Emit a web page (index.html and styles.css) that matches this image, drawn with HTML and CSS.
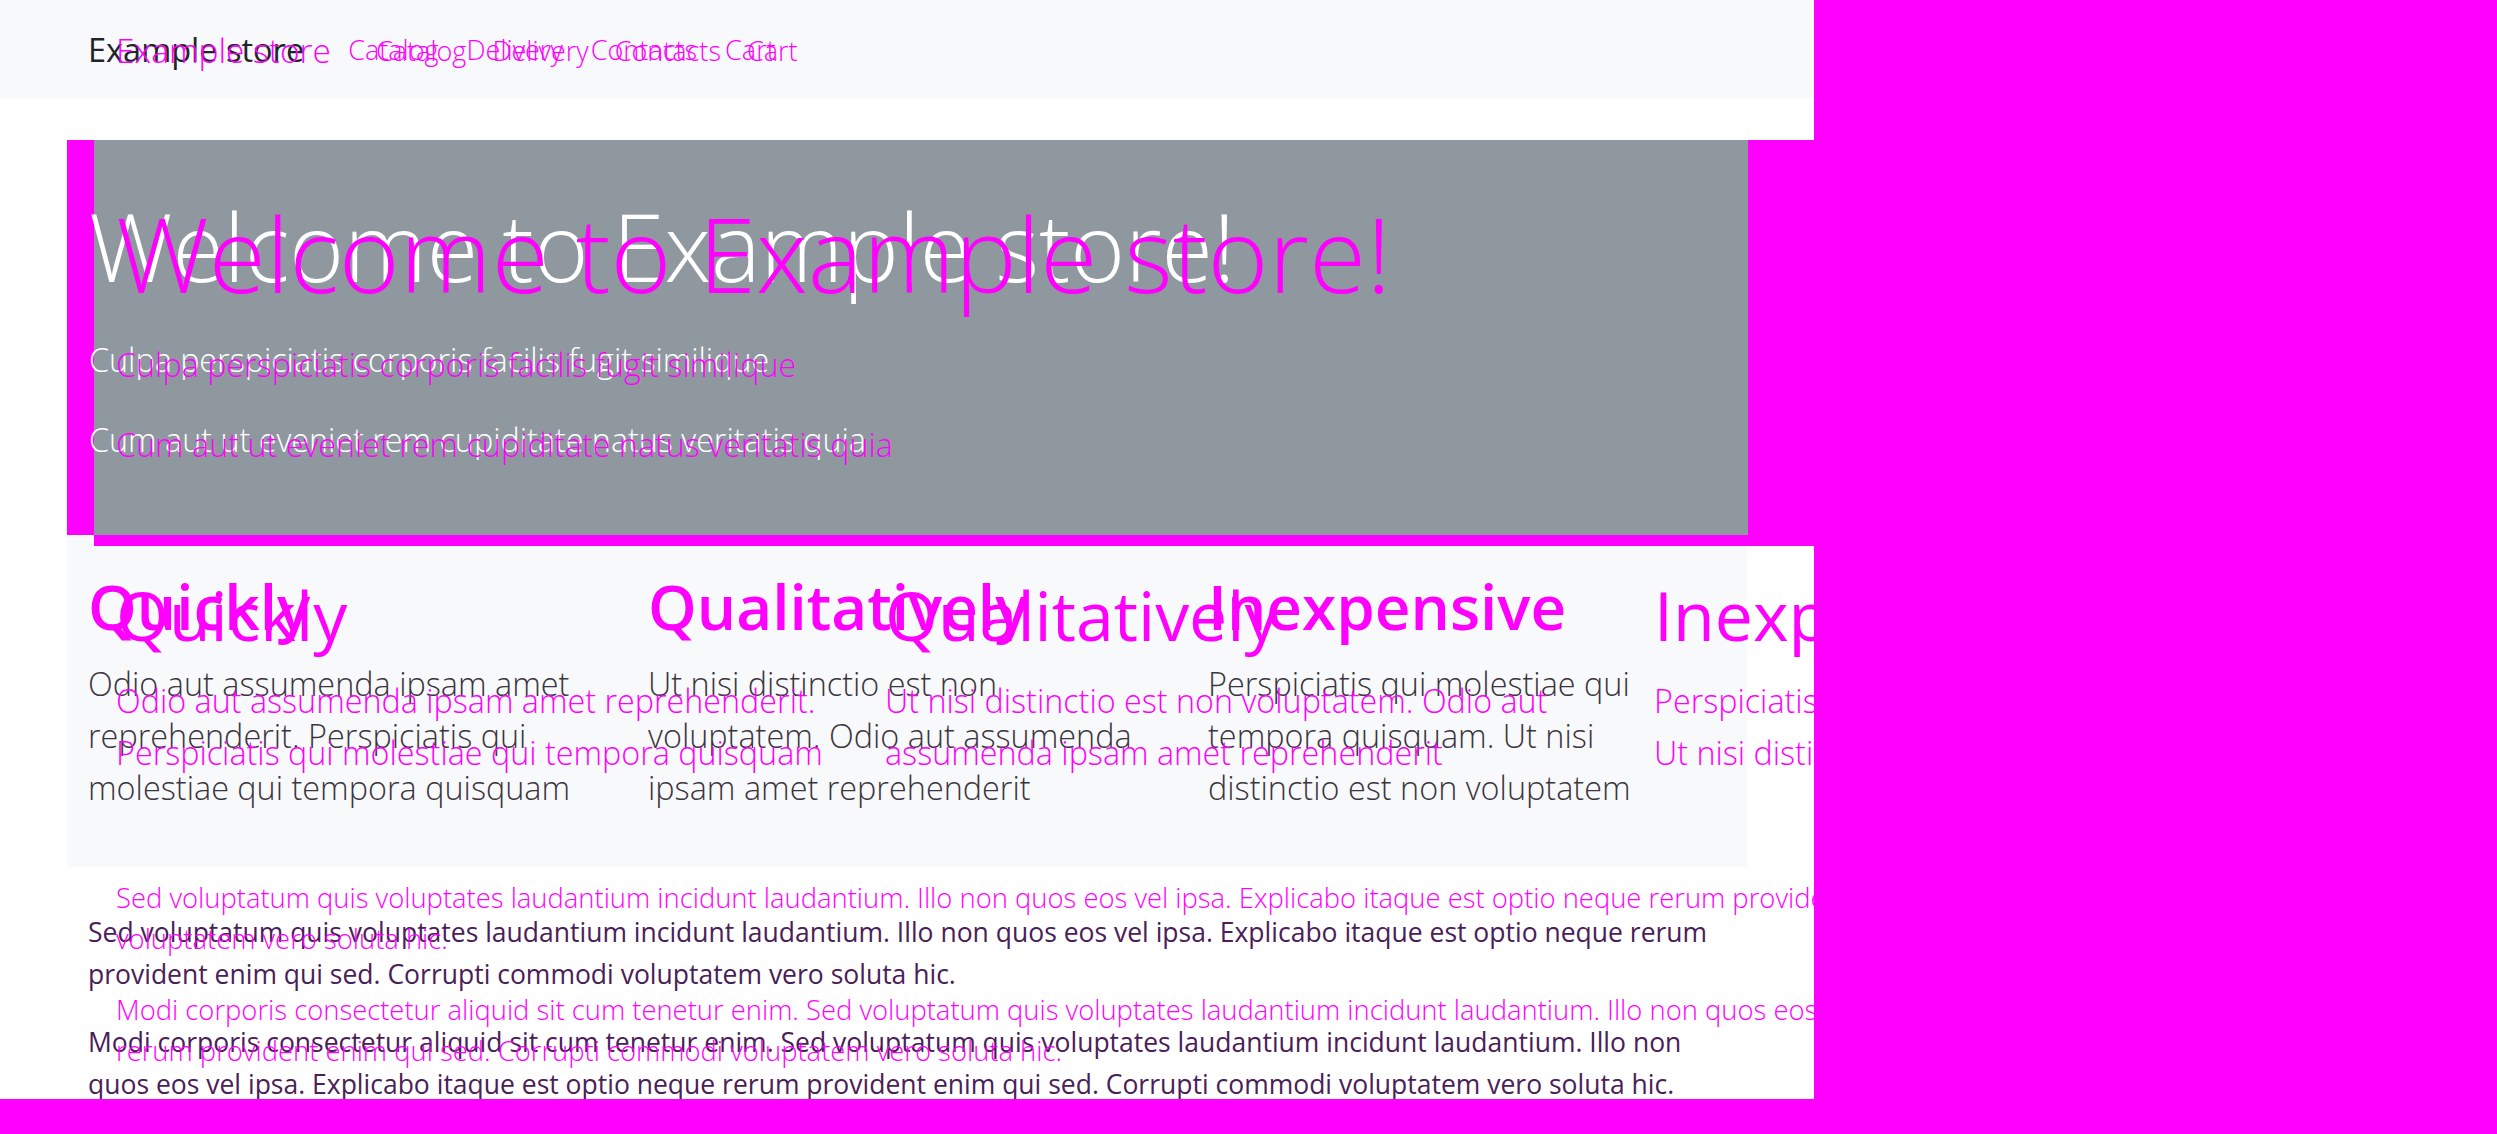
FILE: index.html
```html
<!DOCTYPE html>
<html lang="en">
<head>
<meta charset="utf-8">
<title>Example store</title>
<link rel="stylesheet" href="styles.css">
</head>
<body>
<div class="canvas">
  <nav class="nav">
    <div class="nav-base">
      <a class="brand">Example store</a>
      <ul class="links">
        <li>Catalog</li><li>Delivery</li><li>Contacts</li><li>Cart</li>
      </ul>
    </div>
    <div class="nav-ghost">
      <a class="brand">Example store</a>
      <ul class="links">
        <li>Catalog</li><li>Delivery</li><li>Contacts</li><li>Cart</li>
      </ul>
    </div>
  </nav>

  <section class="hero">
    <div class="hero-base">
      <h1 class="display">Welcome to Example store!</h1>
      <p class="lead">Culpa perspiciatis corporis facilis fugit similique</p>
      <p class="lead">Cum aut ut eveniet rem cupiditate natus veritatis quia</p>
    </div>
    <div class="hero-ghost">
      <h1 class="display">Welcome to Example store!</h1>
      <p class="lead">Culpa perspiciatis corporis facilis fugit similique</p>
      <p class="lead">Cum aut ut eveniet rem cupiditate natus veritatis quia</p>
    </div>
  </section>

  <section class="features">
    <div class="feat-base">
      <div class="col">
        <h2>Quickly</h2>
        <p>Odio aut assumenda ipsam amet<br>reprehenderit. Perspiciatis qui<br>molestiae qui tempora quisquam</p>
      </div>
      <div class="col">
        <h2>Qualitatively</h2>
        <p>Ut nisi distinctio est non<br>voluptatem. Odio aut assumenda<br>ipsam amet reprehenderit</p>
      </div>
      <div class="col">
        <h2>Inexpensive</h2>
        <p>Perspiciatis qui molestiae qui<br>tempora quisquam. Ut nisi<br>distinctio est non voluptatem</p>
      </div>
    </div>
    <div class="feat-ghost">
      <div class="col">
        <h2>Quickly</h2>
        <p>Odio aut assumenda ipsam amet reprehenderit.<br>Perspiciatis qui molestiae qui tempora quisquam</p>
      </div>
      <div class="col">
        <h2>Qualitatively</h2>
        <p>Ut nisi distinctio est non voluptatem. Odio aut<br>assumenda ipsam amet reprehenderit</p>
      </div>
      <div class="col">
        <h2>Inexpensive</h2>
        <p>Perspiciatis qui molestiae qui tempora quisquam.<br>Ut nisi distinctio est non voluptatem</p>
      </div>
    </div>
  </section>

  <section class="text">
    <div class="text-base">
      <p>Sed voluptatum quis voluptates laudantium incidunt laudantium. Illo non quos eos vel ipsa. Explicabo itaque est optio neque rerum<br>provident enim qui sed. Corrupti commodi voluptatem vero soluta hic.</p>
      <p>Modi corporis consectetur aliquid sit cum tenetur enim. Sed voluptatum quis voluptates laudantium incidunt laudantium. Illo non<br>quos eos vel ipsa. Explicabo itaque est optio neque rerum provident enim qui sed. Corrupti commodi voluptatem vero soluta hic.</p>
    </div>
    <div class="text-ghost">
      <p>Sed voluptatum quis voluptates laudantium incidunt laudantium. Illo non quos eos vel ipsa. Explicabo itaque est optio neque rerum provident enim qui sed. Corrupti commodi<br>voluptatem vero soluta hic.</p>
      <p>Modi corporis consectetur aliquid sit cum tenetur enim. Sed voluptatum quis voluptates laudantium incidunt laudantium. Illo non quos eos vel ipsa. Explicabo itaque est optio neque<br>rerum provident enim qui sed. Corrupti commodi voluptatem vero soluta hic.</p>
    </div>
  </section>
</div>
</body>
</html>
```

FILE: styles.css
```css
* { box-sizing: border-box; }
html, body { margin: 0; padding: 0; }
body {
  background: #ff00ff;
  width: 2497px;
  height: 1134px;
  overflow: hidden;
  font-family: "Open Sans", "Noto Sans", sans-serif;
}
.canvas {
  position: relative;
  width: 1814px;
  height: 1099px;
  background: #ffffff;
  overflow: hidden;
}
p, h1, h2, ul { margin: 0; padding: 0; }

/* NAV */
.nav {
  position: relative;
  height: 98px;
  background: #f8f9fa;
}
.nav-base, .nav-ghost {
  display: flex;
  align-items: center;
  height: 98px;
}
.nav-base { padding-left: 88px; }
.nav-ghost {
  position: absolute;
  left: 0; top: 1px;
  padding-left: 116px;
}
.brand {
  font-size: 32.5px;
  margin-right: 30px;
  white-space: nowrap;
}
.nav-base .brand { color: #212529; }
.nav-ghost .brand { color: #ff00ff; font-weight: 300; font-size: 33.5px; margin-right: 32px; }
.links {
  list-style: none;
  display: flex;
}
.links li {
  font-size: 27px;
  font-weight: 300;
  padding: 0 14px;
  color: #ff00ff;
}
.nav-ghost .links li { padding: 0 13px; }

/* HERO */
.hero {
  position: relative;
  margin-top: 42px;
  margin-left: 67px;
  width: 1747px;
  height: 395px;
  background:
    linear-gradient(#90989f, #90989f) 27px 0 / 1654px 395px no-repeat,
    #ff00ff;
}
.hero-base { padding: 51px 0 0 22px; color: #ffffff; }
.hero-ghost {
  position: absolute;
  left: 49px; top: 0;
  padding-top: 58px;
  color: #ff00ff;
  white-space: nowrap;
}
.display {
  font-weight: 300;
  font-size: 93.5px;
  line-height: 110px;
  white-space: nowrap;
}
.hero-ghost .display { font-size: 104px; }
.lead {
  font-weight: 300;
  font-size: 32.3px;
  line-height: 52px;
  white-space: nowrap;
}
.hero-base .display { margin-bottom: 32px; }
.hero-base .lead + .lead { margin-top: 28px; }
.hero-ghost .display { margin-bottom: 30px; }
.hero-ghost .lead + .lead { margin-top: 28px; }

/* FEATURES */
.features {
  position: relative;
  margin-left: 67px;
  width: 1747px;
  height: 332px;
  background:
    linear-gradient(#ff00ff, #ff00ff) 27px 0 / 1720px 11px no-repeat,
    linear-gradient(#f8f9fa, #f8f9fa) 0 0 / 1680px 100% no-repeat;
}
.feat-base {
  display: grid;
  grid-template-columns: repeat(3, 560px);
  padding-top: 34px;
}
.feat-base .col { padding: 0 21px; }
.feat-base h2 {
  font-size: 62px;
  font-weight: 600;
  line-height: 74px;
  color: #ff00ff;
  white-space: nowrap;
}
.feat-base p {
  margin-top: 14px;
  font-size: 32.4px;
  font-weight: 300;
  line-height: 52px;
  color: #3b3540;
  white-space: nowrap;
}
.feat-ghost {
  position: absolute;
  left: 27px; top: 0;
  display: grid;
  grid-template-columns: repeat(3, 769px);
  padding-top: 40px;
}
.feat-ghost .col { padding: 0 22px; }
.feat-ghost h2 {
  font-size: 68px;
  font-weight: 400;
  line-height: 80px;
  color: #ff00ff;
  white-space: nowrap;
}
.feat-ghost p {
  margin-top: 19px;
  font-size: 32.3px;
  font-weight: 300;
  line-height: 52px;
  color: #ff00ff;
  white-space: nowrap;
}

/* TEXT */
.text { position: relative; }
.text-base { padding: 44px 0 0 88px; }
.text-base p {
  font-size: 26.5px;
  line-height: 42px;
  color: #4a2058;
  white-space: nowrap;
  margin-bottom: 26px;
}
.text-ghost {
  position: absolute;
  left: 0; top: 0;
  padding: 10px 0 0 116px;
}
.text-ghost p {
  font-size: 27.4px;
  font-weight: 300;
  line-height: 41px;
  color: #ff00ff;
  white-space: nowrap;
  margin-bottom: 30px;
}
```
